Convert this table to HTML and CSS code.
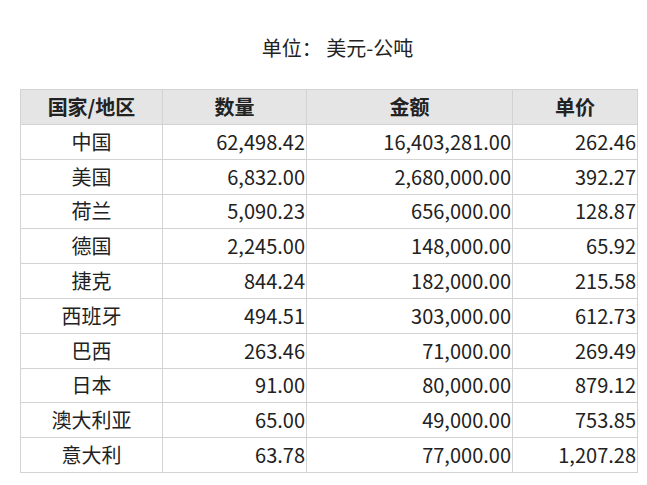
FILE: index.html
```html
<!DOCTYPE html>
<html lang="zh-CN">
<head>
<meta charset="utf-8">
<link rel="stylesheet" href="styles.css">
</head>
<body>
<div class="page">
  <div class="title">单位：&nbsp;美元-公吨</div>
  <table class="data">
    <colgroup>
      <col class="c1"><col class="c2"><col class="c3"><col class="c4">
    </colgroup>
    <thead>
      <tr><th>国家/地区</th><th>数量</th><th>金额</th><th>单价</th></tr>
    </thead>
    <tbody>
      <tr><td class="name">中国</td><td>62,498.42</td><td>16,403,281.00</td><td>262.46</td></tr>
      <tr><td class="name">美国</td><td>6,832.00</td><td>2,680,000.00</td><td>392.27</td></tr>
      <tr><td class="name">荷兰</td><td>5,090.23</td><td>656,000.00</td><td>128.87</td></tr>
      <tr><td class="name">德国</td><td>2,245.00</td><td>148,000.00</td><td>65.92</td></tr>
      <tr><td class="name">捷克</td><td>844.24</td><td>182,000.00</td><td>215.58</td></tr>
      <tr><td class="name">西班牙</td><td>494.51</td><td>303,000.00</td><td>612.73</td></tr>
      <tr><td class="name">巴西</td><td>263.46</td><td>71,000.00</td><td>269.49</td></tr>
      <tr><td class="name">日本</td><td>91.00</td><td>80,000.00</td><td>879.12</td></tr>
      <tr><td class="name">澳大利亚</td><td>65.00</td><td>49,000.00</td><td>753.85</td></tr>
      <tr><td class="name">意大利</td><td>63.78</td><td>77,000.00</td><td>1,207.28</td></tr>
    </tbody>
  </table>
</div>
</body>
</html>
```
FILE: styles.css
```css
html, body {
  margin: 0;
  padding: 0;
  background: #ffffff;
}
body {
  font-family: "Noto Sans CJK SC", "Noto Sans", sans-serif;
  color: #222222;
}
.page {
  padding: 36px 10px 0 20px;
}
.title {
  font-size: 20px;
  line-height: 24px;
  text-align: center;
  padding-left: 18px;
  color: #222222;
  margin-bottom: 29px;
}
.data {
  border-collapse: collapse;
  table-layout: fixed;
  width: 617px;
  font-size: 20px;
}
.c1 { width: 142px; }
.c2 { width: 144px; }
.c3 { width: 206px; }
.c4 { width: 125px; }
.data th,
.data td {
  border: 1px solid #d3d3d3;
  padding: 0 1px 0 0;
  line-height: 24px;
  white-space: nowrap;
  overflow: hidden;
}
.data th {
  background: #e5e5e5;
  font-weight: 700;
  height: 34px;
  text-align: center;
  padding: 0;
}
.data td {
  height: 33.8px;
  text-align: right;
}
.data td.name {
  text-align: center;
  padding: 0;
}
```
